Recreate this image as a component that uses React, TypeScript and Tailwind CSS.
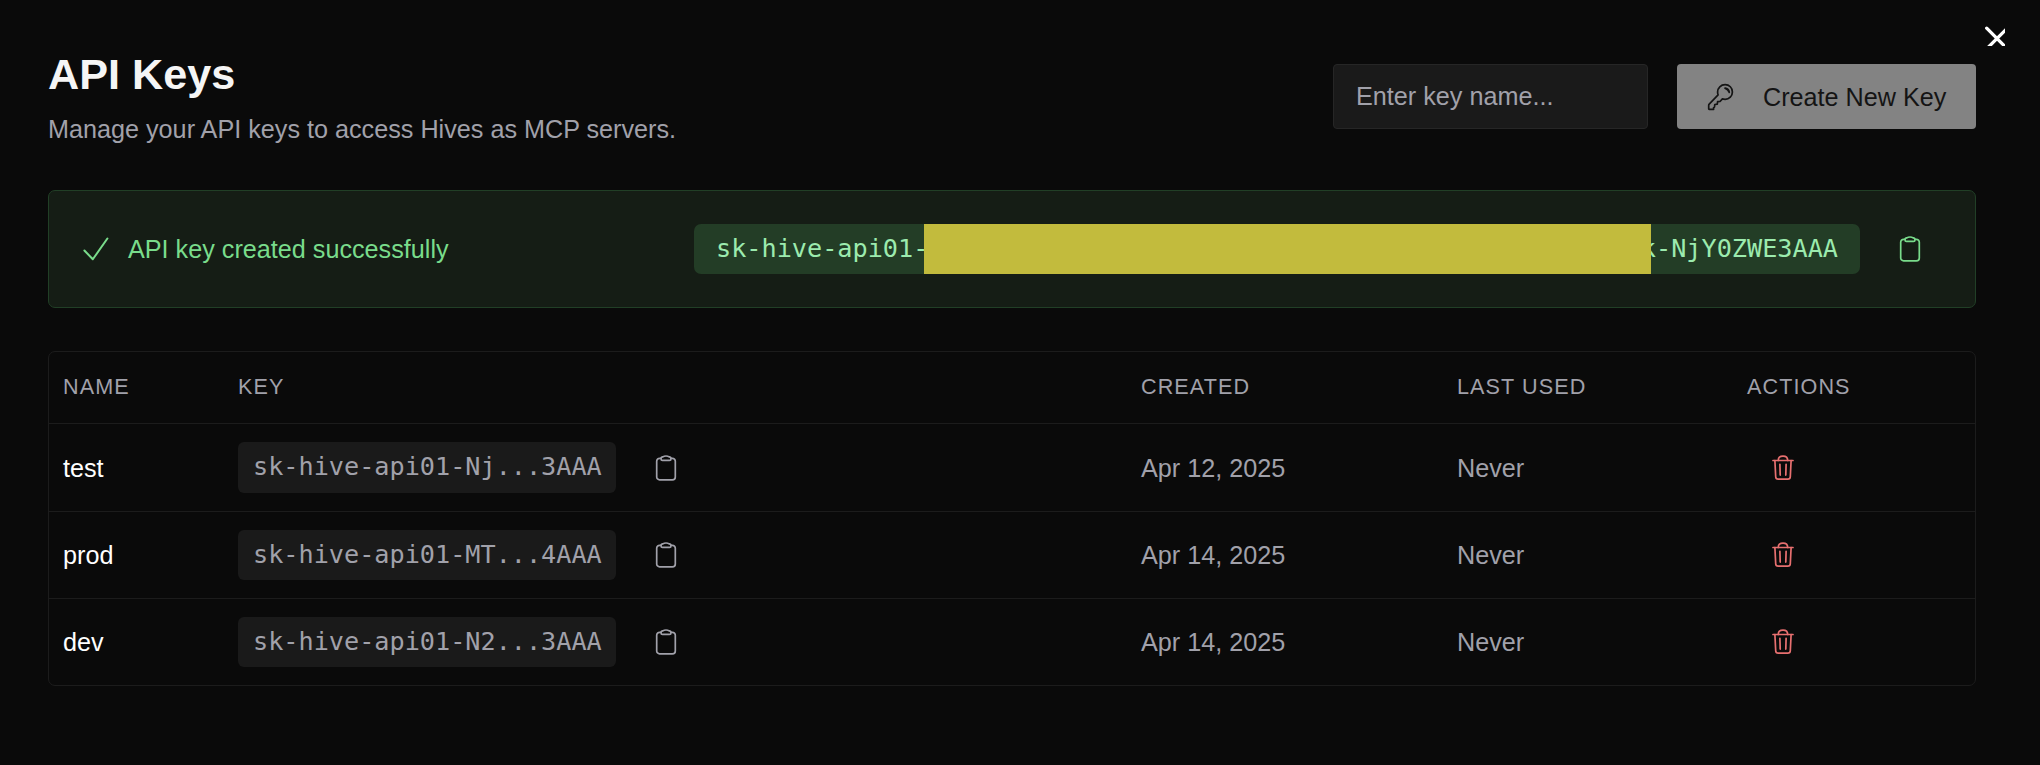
function Clipboard({ className }: { className: string }) {
  return (
    <svg viewBox="0 0 28 28" className={`h-7 w-7 shrink-0 ${className}`} fill="none" stroke="currentColor" strokeWidth="1.7" strokeLinejoin="round">
      <path d="M9.400 4.300H7.600a2.900 2.900 0 0 0-2.900 2.900v15.700a2.900 2.900 0 0 0 2.900 2.900h12.800a2.900 2.900 0 0 0 2.900-2.900V7.200a2.900 2.900 0 0 0-2.900-2.900h-1.800" />
      <path d="M9 4.700c0-1.100.6-1.700 1.900-1.800.8-.6 1.800-.9 3.100-.9s2.300.3 3.100.9c1.300.1 1.900.7 1.900 1.800 0 1.200-.5 1.700-1.500 1.700h-7c-1 0-1.500-.5-1.500-1.700z" />
    </svg>
  );
}

function Trash() {
  return (
    <svg viewBox="0 0 28 28" className="h-7 w-7 shrink-0 text-[#e87070]" fill="none" stroke="currentColor" strokeWidth="1.7" strokeLinecap="round" strokeLinejoin="round">
      <path d="M4 6.500h20" />
      <path d="M9.300 6.400c0-2.800 1.500-4.300 4.700-4.300s4.700 1.500 4.700 4.300" />
      <path d="M5.900 6.700l.8 16a2.500 2.500 0 0 0 2.500 2.400h9.600a2.500 2.500 0 0 0 2.500-2.400l.8-16" />
      <path d="M10.900 10.300l.3 10.800M17.100 10.300l-.3 10.800" />
    </svg>
  );
}

function Key() {
  return (
    <svg viewBox="0 0 28 28" className="mr-[28px] h-7 w-7 shrink-0" fill="none" stroke="currentColor" strokeWidth="1.7" strokeLinecap="round" strokeLinejoin="round">
      <path d="M18.100 1.700c4.200 0 7.300 3.100 7.300 7.200s-3.200 7.400-7.300 7.400c-1 0-1.900-.1-2.700-.4l-2.400 2.600-2.400.2-.3 2.500-2.500.3-.3 2.500-.9.6v1.700H2.300c-.4 0-.6-.2-.6-.6v-3.300c0-.5.2-.9.500-1.200l8.900-9.300c-.4-.9-.5-1.900-.5-2.900 0-4.200 3.300-7.300 7.500-7.300z" />
      <path d="M18 5.100c2.400.2 4 1.800 4.300 4.300-.7-1.900-2.300-3.500-4.300-4.300z" />
    </svg>
  );
}

const cols = "grid grid-cols-[175px_903px_316px_290px_1fr] items-center pl-[14px]";

const keys = [
  { name: "test", key: "sk-hive-api01-Nj...3AAA", created: "Apr 12, 2025", height: "h-[88px]", chip: "h-[51px]" },
  { name: "prod", key: "sk-hive-api01-MT...4AAA", created: "Apr 14, 2025", height: "h-[87px]", chip: "h-[50px]" },
  { name: "dev", key: "sk-hive-api01-N2...3AAA", created: "Apr 14, 2025", height: "h-[86px]", chip: "h-[50px]" },
];

function Code({ children, className }: { children: string; className: string }) {
  return (
    <code className={`block font-['DejaVu_Sans_Mono',monospace] text-[25.2px] whitespace-nowrap ${className}`}>{children}</code>
  );
}

export default function App() {
  return (
    <main className="relative h-[765px] w-full overflow-hidden bg-[#0a0a0a] pr-[64px] pl-[48px] font-['Liberation_Sans',sans-serif] text-[25.2px] text-[#a1a1aa]">
      <button className="absolute top-[26px] right-[35px]" aria-label="Close">
        <svg viewBox="0 0 20 20" className="h-5 w-5 overflow-hidden" fill="none" stroke="#fff" strokeWidth="3.3" strokeLinecap="round">
          <path d="M1.700 2.200L24 24.500M24 .5L0 24.500" />
        </svg>
      </button>

      <header className="flex h-[190px] items-start justify-between">
        <div className="pt-[49px]">
          <h1 className="text-[43.2px] leading-[50px] font-bold text-[#f5f5f5]">API Keys</h1>
          <p className="mt-[12px] leading-[36px]">Manage your API keys to access Hives as MCP servers.</p>
        </div>
        <div className="flex gap-[29px] pt-[64px]">
          <div className="flex h-[65px] w-[315px] items-center rounded-[4px] border border-[#262626] bg-[#1a1a1a] px-[22px]">
            Enter key name...
          </div>
          <button className="flex h-[65px] w-[299px] items-center rounded-[4px] bg-[#838383] pl-[30px] text-[#141414]">
            <Key />
            <span className="pt-[2px]">Create New Key</span>
          </button>
        </div>
      </header>

      <section className="flex h-[118px] items-center rounded-[7px] border border-[#213f26] bg-[#151d15] pl-[33px] text-[#79dc8b]">
        <svg viewBox="0 0 28 28" className="mr-[18px] h-7 w-7" fill="none" stroke="currentColor" strokeWidth="2" strokeLinecap="round" strokeLinejoin="round">
          <path d="M2.400 15.500l8.400 8.800L25.400 3.500" />
        </svg>
        <span className="pt-[2px]">API key created successfully</span>
        <div className="relative mr-[36px] ml-auto flex h-[50px] w-[1166px] justify-between rounded-[7px] bg-[#233d26] px-[22px] text-[#9cebae]">
          <Code className="leading-[49px]">sk-hive-api01-</Code>
          <Code className="leading-[49px]">k-NjY0ZWE3AAA</Code>
          <div className="absolute inset-y-0 left-[230px] w-[727px] bg-[#c2bb3d]" />
        </div>
        <Clipboard className="mr-[51px]" />
      </section>

      <section className="mt-[43px] h-[335px] rounded-[7px] border border-[#1c1c1c]">
        <div className={`${cols} h-[71px] text-[21.6px] tracking-[1.08px]`}>
          <span>NAME</span>
          <span>KEY</span>
          <span>CREATED</span>
          <span>LAST USED</span>
          <span>ACTIONS</span>
        </div>
        {keys.map((k) => (
          <div key={k.name} className={`${cols} ${k.height} border-t border-[#1c1c1c]`}>
            <span className="pt-[2px] text-white">{k.name}</span>
            <div className="flex items-center">
              <Code className={`${k.chip} w-[378px] rounded-[6px] bg-[#1a1a1a] pl-[15px] leading-[49px]`}>{k.key}</Code>
              <Clipboard className="ml-[36px]" />
            </div>
            <span className="pt-[2px]">{k.created}</span>
            <span className="pt-[2px]">Never</span>
            <div className="pl-[22px]">
              <Trash />
            </div>
          </div>
        ))}
      </section>
    </main>
  );
}
